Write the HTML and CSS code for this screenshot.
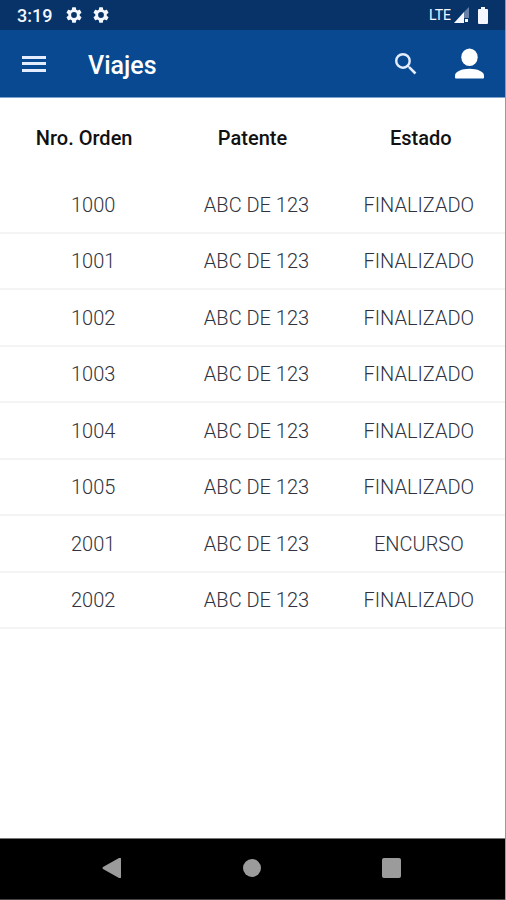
FILE: index.html
```html
<!DOCTYPE html>
<html lang="es">
<head>
<meta charset="utf-8">
<meta name="viewport" content="width=device-width, initial-scale=1">
<title>Viajes</title>
<link rel="stylesheet" href="styles.css">
</head>
<body>
<div class="screen">
  <div class="status-bar">
    <time class="clock">3:19</time>
    <svg class="gear" viewBox="2 2 20 20" aria-hidden="true"><path d="M19.14 12.94c.04-.3.06-.61.06-.94s-.02-.64-.07-.94l2.03-1.58a.49.49 0 0 0 .12-.61l-1.92-3.32a.49.49 0 0 0-.59-.22l-2.39.96a7 7 0 0 0-1.62-.94l-.36-2.54a.48.48 0 0 0-.48-.41h-3.84a.47.47 0 0 0-.47.41l-.36 2.54c-.59.24-1.13.57-1.62.94l-2.39-.96a.48.48 0 0 0-.59.22L2.74 8.87a.47.47 0 0 0 .12.61l2.03 1.58a7.4 7.4 0 0 0 0 1.88l-2.03 1.58a.49.49 0 0 0-.12.61l1.92 3.32c.12.22.37.29.59.22l2.39-.96c.5.38 1.03.7 1.62.94l.36 2.54c.05.24.24.41.48.41h3.84c.24 0 .44-.17.47-.41l.36-2.54c.59-.24 1.13-.56 1.62-.94l2.39.96c.22.08.47 0 .59-.22l1.92-3.32a.47.47 0 0 0-.12-.61zM12 15.6a3.6 3.6 0 1 1 0-7.2 3.6 3.6 0 0 1 0 7.2z"/></svg>
    <svg class="gear" viewBox="2 2 20 20" aria-hidden="true"><path d="M19.14 12.94c.04-.3.06-.61.06-.94s-.02-.64-.07-.94l2.03-1.58a.49.49 0 0 0 .12-.61l-1.92-3.32a.49.49 0 0 0-.59-.22l-2.39.96a7 7 0 0 0-1.62-.94l-.36-2.54a.48.48 0 0 0-.48-.41h-3.84a.47.47 0 0 0-.47.41l-.36 2.54c-.59.24-1.13.57-1.62.94l-2.39-.96a.48.48 0 0 0-.59.22L2.74 8.87a.47.47 0 0 0 .12.61l2.03 1.58a7.4 7.4 0 0 0 0 1.88l-2.03 1.58a.49.49 0 0 0-.12.61l1.92 3.32c.12.22.37.29.59.22l2.39-.96c.5.38 1.03.7 1.62.94l.36 2.54c.05.24.24.41.48.41h3.84c.24 0 .44-.17.47-.41l.36-2.54c.59-.24 1.13-.56 1.62-.94l2.39.96c.22.08.47 0 .59-.22l1.92-3.32a.47.47 0 0 0-.12-.61zM12 15.6a3.6 3.6 0 1 1 0-7.2 3.6 3.6 0 0 1 0 7.2z"/></svg>
    <span class="network">LTE</span>
    <svg class="signal" viewBox="0 0 15 16" aria-hidden="true"><path class="faint" d="M15 0v11h-5V5z"/><path d="M0 16L10 5v11zM11 12h3v3h-3z"/></svg>
    <svg class="battery" viewBox="0 0 10 17" aria-hidden="true"><path d="M3 0h4v2h2q1 0 1 1v13q0 1-1 1H1q-1 0-1-1V3q0-1 1-1h2z"/></svg>
  </div>
  <header class="app-bar">
    <button class="icon-button" type="button" aria-label="Menú"><svg class="menu" viewBox="0 0 24 18"><path d="M0 1h24v3H0zM0 7h24v3H0zM0 14h24v3H0z"/></svg></button>
    <h1 class="title">Viajes</h1>
    <button class="icon-button" type="button" aria-label="Buscar"><svg class="search" viewBox="3 3 18 18"><path d="M15.5 14h-.79l-.28-.27A6.47 6.47 0 0 0 16 9.5 6.500 6.500 0 1 0 9.500 16c1.610 0 3.090-.59 4.230-1.570l.27.28v.79l5 4.990L20.490 19zm-6 0a4.500 4.500 0 1 1 0-9 4.500 4.500 0 0 1 0 9z"/></svg></button>
    <button class="icon-button" type="button" aria-label="Perfil"><svg class="person" viewBox="0 0 30 32"><ellipse cx="15" cy="9" rx="8.500" ry="9"/><path d="M0 30v-2c0-4 7-7 15-7s15 3 15 7v2q0 1-1 1H1q-1 0-1-1z"/></svg></button>
  </header>
  <main class="content">
    <table class="trips">
      <thead><tr><th scope="col">Nro. Orden</th><th scope="col">Patente</th><th scope="col">Estado</th></tr></thead>
      <tbody>
        <tr><td>1000</td><td>ABC DE 123</td><td>FINALIZADO</td></tr>
        <tr><td>1001</td><td>ABC DE 123</td><td>FINALIZADO</td></tr>
        <tr><td>1002</td><td>ABC DE 123</td><td>FINALIZADO</td></tr>
        <tr><td>1003</td><td>ABC DE 123</td><td>FINALIZADO</td></tr>
        <tr><td>1004</td><td>ABC DE 123</td><td>FINALIZADO</td></tr>
        <tr><td>1005</td><td>ABC DE 123</td><td>FINALIZADO</td></tr>
        <tr><td>2001</td><td>ABC DE 123</td><td>ENCURSO</td></tr>
        <tr><td>2002</td><td>ABC DE 123</td><td>FINALIZADO</td></tr>
      </tbody>
    </table>
  </main>
  <nav class="system-nav" aria-label="Sistema">
    <button class="icon-button" type="button" aria-label="Atrás"><svg class="nav-icon" viewBox="0 0 20 20"><path d="M1 9L17 0q2-1 2 1v18q0 2-2 1L1 11q-1-1 0-2z"/></svg></button>
    <button class="icon-button" type="button" aria-label="Inicio"><svg class="nav-icon" viewBox="0 0 20 20"><circle cx="10" cy="10" r="9"/></svg></button>
    <button class="icon-button" type="button" aria-label="Recientes"><svg class="nav-icon" viewBox="0 0 20 20"><rect width="19" height="20" rx="2"/></svg></button>
  </nav>
</div>
</body>
</html>
```
FILE: styles.css
```css
* { box-sizing: border-box; }

body {
  margin: 0;
  background: #fff;
  font-family: Roboto, "Liberation Sans", sans-serif;
}

svg { display: block; fill: currentColor; }

.screen {
  display: flex;
  flex-direction: column;
  min-height: 100vh;
  border-right: 1px solid #999;
}

.status-bar {
  display: flex;
  align-items: center;
  height: 30px;
  padding: 0 17px;
  background: #073369;
  color: #f4f7ff;
}

.clock {
  margin-right: 14px;
  font-size: 18px;
  font-weight: 500;
}

.gear { width: 16px; height: 16px; margin-right: 11px; }

.network {
  margin-left: auto;
  margin-right: 3px;
  font-size: 14px;
}

.signal { width: 15px; height: 16px; margin-right: 9px; }
.faint { opacity: 0.4; }
.battery { width: 10px; height: 17px; }

.app-bar {
  display: flex;
  align-items: center;
  height: 68px;
  padding: 0 21px 0 22px;
  border-bottom: 1px solid #7fa3cf;
  background: #084992;
  color: #fff;
}

.icon-button {
  display: block;
  padding: 0;
  border: 0;
  background: none;
  color: inherit;
}

.menu { width: 24px; height: 18px; color: #e3edff; }

.title {
  flex: 1;
  margin: 0 0 0 42px;
  padding-top: 4px;
  font-size: 25px;
  font-weight: 500;
}

.search { width: 22px; height: 22px; margin-right: 38px; color: #e3edff; }
.person { width: 29px; height: 32px; }

.content { flex: 1; }

.trips {
  width: 100%;
  table-layout: fixed;
  border-collapse: separate;
  border-spacing: 0;
  text-align: center;
}

.trips th {
  height: 79px;
  padding: 0;
  color: #111;
  font-size: 20px;
  font-weight: 500;
}

.trips td {
  height: 57px;
  padding: 0;
  border-bottom: 2px solid #f4f4f4;
  color: #30333e;
  font-size: 20px;
  font-weight: 300;
}

.trips tr:nth-child(even) td { height: 56px; }
.trips td:first-child { padding-left: 18px; }
.trips td:nth-child(2) { padding-left: 8px; }
.trips td:last-child { padding-right: 4px; }

.system-nav {
  display: flex;
  justify-content: center;
  align-items: center;
  gap: 120px;
  height: 62px;
  padding: 0 2px 2px 0;
  border-top: 1px solid #777;
  border-bottom: 1px solid #444;
  background: #000;
  color: #9b9b9b;
}

.nav-icon { width: 20px; height: 20px; }
```
